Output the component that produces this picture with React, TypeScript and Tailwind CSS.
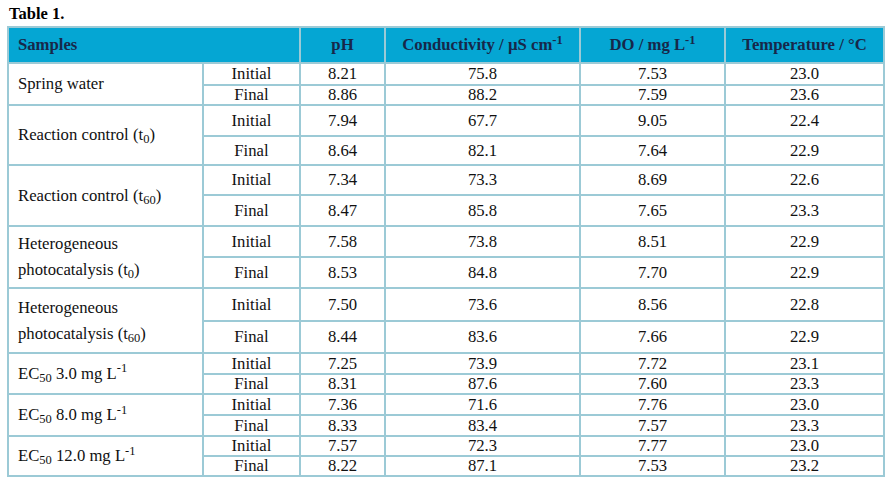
import type { ReactNode } from "react";

interface Sample {
  label: ReactNode;
  h: [number, number];
  initial: string[];
  final: string[];
}

const SAMPLES: Sample[] = [
  { label: "Spring water", h: [22, 19], initial: ["8.21", "75.8", "7.53", "23.0"], final: ["8.86", "88.2", "7.59", "23.6"] },
  {
    label: (
      <>
        Reaction control (t<sub>0</sub>)
      </>
    ),
    h: [31, 29],
    initial: ["7.94", "67.7", "9.05", "22.4"],
    final: ["8.64", "82.1", "7.64", "22.9"],
  },
  {
    label: (
      <>
        Reaction control (t<sub>60</sub>)
      </>
    ),
    h: [30, 31],
    initial: ["7.34", "73.3", "8.69", "22.6"],
    final: ["8.47", "85.8", "7.65", "23.3"],
  },
  {
    label: (
      <>
        Heterogeneous photocatalysis (t<sub>0</sub>)
      </>
    ),
    h: [31, 31],
    initial: ["7.58", "73.8", "8.51", "22.9"],
    final: ["8.53", "84.8", "7.70", "22.9"],
  },
  {
    label: (
      <>
        Heterogeneous photocatalysis (t<sub>60</sub>)
      </>
    ),
    h: [33, 32],
    initial: ["7.50", "73.6", "8.56", "22.8"],
    final: ["8.44", "83.6", "7.66", "22.9"],
  },
  {
    label: (
      <>
        EC<sub>50</sub> 3.0 mg L<sup>-1</sup>
      </>
    ),
    h: [21, 20],
    initial: ["7.25", "73.9", "7.72", "23.1"],
    final: ["8.31", "87.6", "7.60", "23.3"],
  },
  {
    label: (
      <>
        EC<sub>50</sub> 8.0 mg L<sup>-1</sup>
      </>
    ),
    h: [21, 21],
    initial: ["7.36", "71.6", "7.76", "23.0"],
    final: ["8.33", "83.4", "7.57", "23.3"],
  },
  {
    label: (
      <>
        EC<sub>50</sub> 12.0 mg L<sup>-1</sup>
      </>
    ),
    h: [20, 20],
    initial: ["7.57", "72.3", "7.77", "23.0"],
    final: ["8.22", "87.1", "7.53", "23.2"],
  },
];

const CELL = "border-2 border-[#9ccad6] p-0 text-center align-middle";
const HEAD = "border-2 border-[#9ccad6] p-0 text-center align-middle font-bold";

export default function App() {
  return (
    <div className="h-[481px] w-[887px] bg-white font-['Liberation_Serif',serif] text-[16.7px] text-[#111]">
      <h1 className="pl-[9px] pt-[4px] text-[16.5px] font-bold leading-[20px] text-black">Table 1.</h1>
      <table className="ml-[7px] mt-[2px] w-[876px] table-fixed border-collapse leading-[18px]">
        <colgroup>
          <col className="w-[195px]" />
          <col className="w-[97px]" />
          <col className="w-[85px]" />
          <col className="w-[195px]" />
          <col className="w-[145px]" />
          <col className="w-[159px]" />
        </colgroup>
        <thead>
          <tr className="h-[36px] bg-[#05a6d3] text-[#17284a]">
            <th colSpan={2} className={HEAD + " pl-[9px] text-left"}>
              Samples
            </th>
            <th className={HEAD}>pH</th>
            <th className={HEAD}>
              Conductivity / µS cm<sup>-1</sup>
            </th>
            <th className={HEAD}>
              DO / mg L<sup>-1</sup>
            </th>
            <th className={HEAD}>Temperature / °C</th>
          </tr>
        </thead>
        <tbody>
          {SAMPLES.map((s, i) => (
            <>
              <tr key={i + "a"} style={{ height: s.h[0] }}>
                <td rowSpan={2} className="border-2 border-[#9ccad6] py-0 pl-[9px] pr-2 text-left align-middle leading-[26px]">
                  {s.label}
                </td>
                <td className={CELL}>Initial</td>
                {s.initial.map((v, j) => (
                  <td key={j} className={CELL}>
                    {v}
                  </td>
                ))}
              </tr>
              <tr key={i + "b"} style={{ height: s.h[1] }}>
                <td className={CELL}>Final</td>
                {s.final.map((v, j) => (
                  <td key={j} className={CELL}>
                    {v}
                  </td>
                ))}
              </tr>
            </>
          ))}
        </tbody>
      </table>
    </div>
  );
}
